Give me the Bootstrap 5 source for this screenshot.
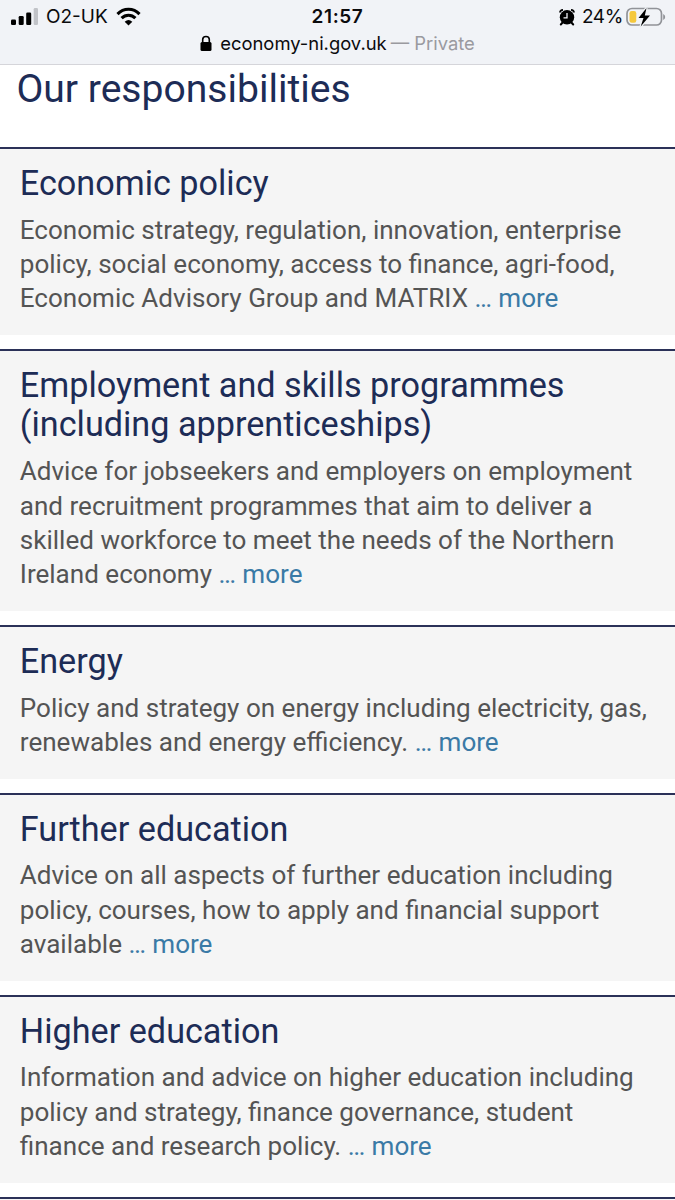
<!DOCTYPE html>
<html lang="en">
<head>
<meta charset="utf-8">
<meta name="viewport" content="width=device-width, initial-scale=1">
<title>Our responsibilities</title>
<link href="https://cdn.jsdelivr.net/npm/bootstrap@5.3.0/dist/css/bootstrap.min.css" rel="stylesheet">
<style>
html,body{height:1200px;overflow:hidden}
body{font-family:Roboto,sans-serif;color:#545454;background:#fff}
.chrome{height:64.5px;background:#f1f3f7;border-bottom:1px solid #d5d5da;font-family:Inter,"Liberation Sans",sans-serif;color:#0b0b0d}
.statusrow{height:32px;padding:1px 9px 0 10px;font-size:19px;line-height:31px}
.clock{left:0;right:0;top:1px;font-weight:600;letter-spacing:.6px}
.carrier{margin:0 8px}
.charge{margin:0 3px 0 7px;letter-spacing:-.4px}
.address{font-size:18.4px;line-height:22px;height:22.4px}
.private{color:#9a9aa0}
.chrome svg{flex:none}
h1,h2{color:#1d2c56;font-weight:400;margin:0;white-space:nowrap}
h1{font-size:39.1px;line-height:46px;padding:1px 0 0 16.4px;height:82.3px}
h2{font-size:34.2px;line-height:39.6px}
.topic{background:#f5f5f5;border-top:2px solid #2b3158;padding:15px 0 19.4px 19.8px;margin-bottom:14px}
.topic p{font-size:26.05px;line-height:34.3px;margin:9.2px 0 0;white-space:nowrap}
.topic a{color:#3a7aa6}
</style>
</head>
<body>
<header class="chrome">
  <div class="statusrow position-relative d-flex justify-content-between">
    <div class="d-flex align-items-center">
      <svg width="28" height="18" viewBox="0 0 28 18" fill="#000"><rect x="1" y="11.500" width="5" height="5.500" rx="1.300"/><rect x="8.700" y="8" width="5" height="9" rx="1.300"/><rect x="16.200" y="4.500" width="5" height="12.500" rx="1.300"/><rect x="23.700" y="0" width="4.300" height="17" rx="1.300" fill="#c1c3c8"/></svg>
      <span class="carrier">O2-UK</span>
      <svg width="25" height="19" viewBox="0 0 25 19" fill="none" stroke="#000" stroke-width="3.100"><path d="M1.500 7.100C7.700.700 17.300.700 23.500 7.100M5.600 11.200C9.500 7.200 15.500 7.200 19.400 11.200"/><path d="M8.700 14.700Q12.500 11.300 16.300 14.700L12.500 18.500z" fill="#000" stroke="none"/></svg>
    </div>
    <div class="clock position-absolute text-center">21:57</div>
    <div class="d-flex align-items-center">
      <svg width="16" height="18" viewBox="0 0 16 18"><path d="M3.600 14.500 1.800 16.500M12.400 14.500l1.800 2" stroke="#000" stroke-width="2" stroke-linecap="round"/><circle cx="8" cy="9.300" r="7.200" fill="#000"/><path d="M1 4.500Q1.200 2 4 1.800M15 4.500Q14.800 2 12 1.800" fill="none" stroke="#000" stroke-width="1.800"/><path d="M8 5v4.800H4.500" fill="none" stroke="#f1f3f7" stroke-width="1.300"/></svg>
      <span class="charge">24%</span>
      <svg width="40" height="20" viewBox="0 0 40 20"><rect x="1" y="1.500" width="34.500" height="16.500" rx="5" fill="none" stroke="#919398" stroke-width="1.700"/><path d="M37.200 7v6q2-1 2-3t-2-3z" fill="#919398"/><rect x="3.500" y="4" width="6.800" height="11.700" rx="2.200" fill="#f5c83c"/><path d="M20.500 1 12.500 11h5l-2.800 8.500L24 8.500h-5.200z" fill="#000" stroke="#f1f3f7" stroke-width="2.400" paint-order="stroke"/></svg>
    </div>
  </div>
  <div class="address d-flex justify-content-center align-items-center">
    <svg width="12" height="17" viewBox="0 0 12 17"><rect x=".5" y="7" width="11" height="9" rx="1.500" fill="#000"/><path d="M2.700 8V4.500Q2.700 1.500 6 1.500T9.300 4.500V8" fill="none" stroke="#000" stroke-width="1.600"/></svg>
    <span class="ms-2">economy-ni.gov.uk</span><span class="private ms-1">— Private</span>
  </div>
</header>
<main>
  <h1>Our responsibilities</h1>
  <section class="topic"><h2>Economic policy</h2>
    <p>Economic strategy, regulation, innovation, enterprise<br>policy, social economy, access to finance, agri-food,<br>Economic Advisory Group and MATRIX <a href="#" class="text-decoration-none">… more</a></p></section>
  <section class="topic"><h2>Employment and skills programmes<br>(including apprenticeships)</h2>
    <p>Advice for jobseekers and employers on employment<br>and recruitment programmes that aim to deliver a<br>skilled workforce to meet the needs of the Northern<br>Ireland economy <a href="#" class="text-decoration-none">… more</a></p></section>
  <section class="topic"><h2>Energy</h2>
    <p>Policy and strategy on energy including electricity, gas,<br>renewables and energy efficiency. <a href="#" class="text-decoration-none">… more</a></p></section>
  <section class="topic"><h2>Further education</h2>
    <p>Advice on all aspects of further education including<br>policy, courses, how to apply and financial support<br>available <a href="#" class="text-decoration-none">… more</a></p></section>
  <section class="topic"><h2>Higher education</h2>
    <p>Information and advice on higher education including<br>policy and strategy, finance governance, student<br>finance and research policy. <a href="#" class="text-decoration-none">… more</a></p></section>
  <section class="topic"></section>
</main>
<script src="https://cdn.jsdelivr.net/npm/bootstrap@5.3.0/dist/js/bootstrap.bundle.min.js"></script>
</body>
</html>
